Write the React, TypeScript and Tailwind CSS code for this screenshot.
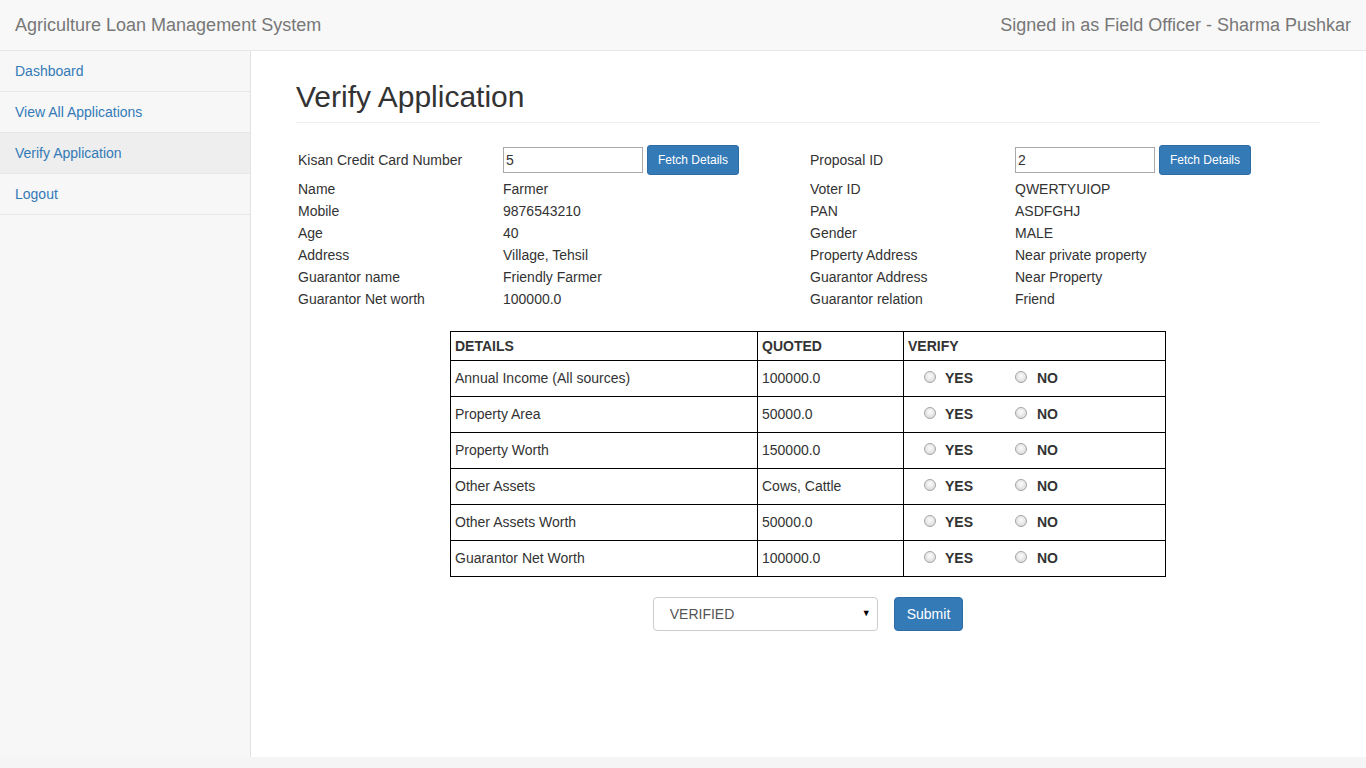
import React from 'react';

const font = "font-['Liberation_Sans',Arial,sans-serif]";

const navItems = ['Dashboard', 'View All Applications', 'Verify Application', 'Logout'];

const leftRows: [string, string][] = [
    ['Name', 'Farmer'],
    ['Mobile', '9876543210'],
    ['Age', '40'],
    ['Address', 'Village, Tehsil'],
    ['Guarantor name', 'Friendly Farmer'],
    ['Guarantor Net worth', '100000.0'],
];

const rightRows: [string, string][] = [
    ['Voter ID', 'QWERTYUIOP'],
    ['PAN', 'ASDFGHJ'],
    ['Gender', 'MALE'],
    ['Property Address', 'Near private property'],
    ['Guarantor Address', 'Near Property'],
    ['Guarantor relation', 'Friend'],
];

const verifyRows: [string, string][] = [
    ['Annual Income (All sources)', '100000.0'],
    ['Property Area', '50000.0'],
    ['Property Worth', '150000.0'],
    ['Other Assets', 'Cows, Cattle'],
    ['Other Assets Worth', '50000.0'],
    ['Guarantor Net Worth', '100000.0'],
];

const Radio: React.FC = () => (
    <span className="inline-block w-[12px] h-[12px] mb-[4px] rounded-full border border-[#a6a6a6] bg-[radial-gradient(circle_at_50%_40%,#fbfbfb_0%,#e6e6e6_55%,#cfcfcf_100%)] flex-shrink-0" />
);

interface FetchRowProps {
    label: string;
    value: string;
}

const FetchRow: React.FC<FetchRowProps> = ({ label, value }) => (
    <div className="flex items-center h-[30px]">
        <div className="w-[207px] pl-[2px]">{label}</div>
        <input
            defaultValue={value}
            className="w-[140px] h-[26px] border border-[#a9a9a9] px-[2px] text-[14px] text-[#333] outline-none"
        />
        <button className="ml-[4px] px-[10px] py-[5px] text-[12px] leading-[18px] text-white bg-[#337ab7] border border-[#2e6da4] rounded-[3px]">
            Fetch Details
        </button>
    </div>
);

const DetailList: React.FC<{ rows: [string, string][] }> = ({ rows }) => (
    <div className="mt-[3px]">
        {rows.map(([k, v]) => (
            <div key={k} className="flex leading-[22px]">
                <div className="w-[207px] pl-[2px]">{k}</div>
                <div>{v}</div>
            </div>
        ))}
    </div>
);

export default function App() {
    return (
        <div className={`${font} h-[768px] bg-[#f5f5f5] text-[14px] text-[#333]`}>
            <header className="h-[51px] bg-[#f8f8f8] border-b border-[#e7e7e7] flex items-center justify-between px-[15px]">
                <span className="text-[18px] text-[#777]">Agriculture Loan Management System</span>
                <span className="text-[18px] text-[#777]">Signed in as Field Officer - Sharma Pushkar</span>
            </header>
            <div className="flex h-[706px]">
                <aside className="w-[251px] flex-shrink-0 bg-[#f7f7f7] border-r border-[#e3e3e3]">
                    <ul>
                        {navItems.map((item) => (
                            <li
                                key={item}
                                className={`h-[41px] border-b border-[#e7e7e7] flex items-center px-[15px] text-[#337ab7] ${item === 'Verify Application' ? 'bg-[#eeeeee]' : ''}`}
                            >
                                {item}
                            </li>
                        ))}
                    </ul>
                </aside>
                <main className="flex-1 bg-white pl-[45px] pr-[46px] pt-[29px]">
                    <div className="border-b border-[#eeeeee] pb-[9px]">
                        <h1 className="text-[30px] leading-[33px] text-[#333]">Verify Application</h1>
                    </div>
                    <div className="grid grid-cols-2 mt-[22px]">
                        <div>
                            <FetchRow label="Kisan Credit Card Number" value="5" />
                            <DetailList rows={leftRows} />
                        </div>
                        <div>
                            <FetchRow label="Proposal ID" value="2" />
                            <DetailList rows={rightRows} />
                        </div>
                    </div>
                    <table className="mx-auto mt-[21px] w-[716px] border-collapse border border-black">
                        <thead>
                            <tr className="h-[29px]">
                                <th className="w-[307px] border border-black px-[4px] text-left font-bold">DETAILS</th>
                                <th className="w-[146px] border border-black px-[4px] text-left font-bold">QUOTED</th>
                                <th className="border border-black px-[4px] text-left font-bold">VERIFY</th>
                            </tr>
                        </thead>
                        <tbody>
                            {verifyRows.map(([k, v]) => (
                                <tr key={k} className="h-[36px]">
                                    <td className="border border-black px-[4px]">{k}</td>
                                    <td className="border border-black px-[4px]">{v}</td>
                                    <td className="border border-black pl-[20px]">
                                        <div className="flex items-center">
                                            <div className="flex items-center w-[91px]">
                                                <Radio />
                                                <span className="ml-[9px] font-bold">YES</span>
                                            </div>
                                            <div className="flex items-center">
                                                <Radio />
                                                <span className="ml-[10px] font-bold">NO</span>
                                            </div>
                                        </div>
                                    </td>
                                </tr>
                            ))}
                        </tbody>
                    </table>
                    <div className="flex justify-center items-center gap-[16px] mt-[20px]">
                        <div className="relative w-[225px]">
                            <select className="appearance-none w-full h-[34px] border border-[#ccc] rounded-[4px] pl-[16px] pr-[20px] text-[14px] text-[#555] bg-white outline-none">
                                <option>VERIFIED</option>
                                <option>REJECTED</option>
                            </select>
                            <span className="absolute right-[7px] top-[10px] text-[9px] text-black pointer-events-none">▼</span>
                        </div>
                        <button className="h-[34px] px-[12px] text-[14px] text-white bg-[#337ab7] border border-[#2e6da4] rounded-[4px]">
                            Submit
                        </button>
                    </div>
                </main>
            </div>
        </div>
    );
}
